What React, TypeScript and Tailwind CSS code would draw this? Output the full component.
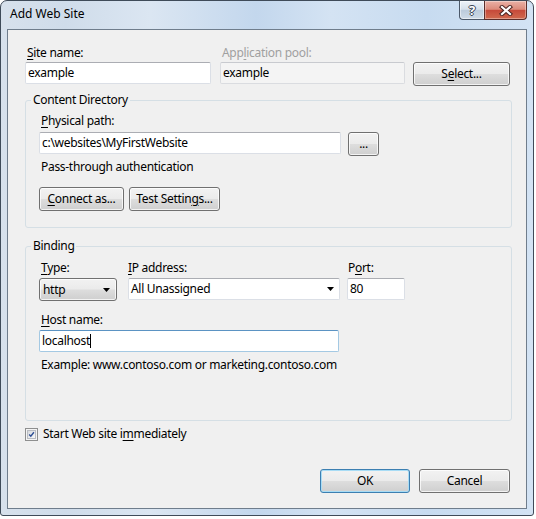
import React from "react";

type Kids = { children?: React.ReactNode };

// Mnemonic (access key) letter
function U({ children }: Kids) {
  return <span className="underline decoration-[1px] underline-offset-[2px]">{children}</span>;
}

function VButton({
  children,
  className = "",
  isDefault = false,
}: Kids & { className?: string; isDefault?: boolean }) {
  return (
    <button
      type="button"
      className={
        "h-[24px] shrink-0 rounded-[3px] border flex items-center justify-center text-[12px] leading-none text-black bg-[linear-gradient(180deg,#f2f2f2_0%,#ebebeb_48%,#dddddd_52%,#cfcfcf_100%)] " +
        (isDefault
          ? "border-[#3c7fb1] shadow-[inset_0_0_0_1px_#a8dcf5] "
          : "border-[#707070] shadow-[inset_0_0_0_1px_rgba(255,255,255,0.75)] ") +
        className
      }
    >
      {children}
    </button>
  );
}

function TextBox({
  children,
  className = "",
  variant = "normal",
}: Kids & { className?: string; variant?: "normal" | "disabled" | "focused" }) {
  const look =
    variant === "focused"
      ? "bg-white border-[#a4c9e3] border-t-[#5b93c3]"
      : variant === "disabled"
      ? "bg-[#f4f4f4] border-[#dadce0] border-t-[#c8cacf]"
      : "bg-white border-[#dbdfe6] border-t-[#abadb3]";
  return (
    <div
      className={
        "h-[22px] shrink-0 rounded-[2px] border flex items-center pl-[2px] text-[12px] leading-none " +
        look +
        " " +
        className
      }
    >
      {children}
    </div>
  );
}

function Arrow() {
  return (
    <svg width="7" height="4" viewBox="0 0 7 4" className="shrink-0">
      <polygon points="0,0 7,0 3.5,4" fill="#000" />
    </svg>
  );
}

function Label({ children, className = "" }: Kids & { className?: string }) {
  return <div className={"h-[16px] leading-[18px] whitespace-nowrap " + className}>{children}</div>;
}

export default function App() {
  return (
    <div className="w-[536px] h-[519px] bg-white font-['Noto_Sans',sans-serif] text-[12px] text-black tracking-[-0.3px]">
      {/* window frame */}
      <div className="w-[534px] h-[516px] flex flex-col rounded-t-[7px] rounded-b-[3px] border border-[#3f4b59] bg-[linear-gradient(90deg,#d7e1ec_0%,#cfdcea_12%,#dbe6f2_28%,#c3d7ed_48%,#d4e3f3_62%,#c7dbf0_80%,#d3e3f4_100%)] px-[6px] pb-[6px]">
        {/* title bar */}
        <div className="h-[28px] flex items-start shrink-0">
          <span className="pl-[3px] pt-[5px] leading-[16px] tracking-normal">Add Web Site</span>
          <div className="ml-auto flex h-[19px]">
            <div className="w-[25px] h-full border-l border-b border-[#4b5869] rounded-bl-[4px] bg-[linear-gradient(180deg,#eef3f8_0%,#d6e0ea_46%,#bccbdb_52%,#cfdbe7_100%)] flex items-center justify-center shadow-[inset_0_0_0_1px_rgba(255,255,255,0.5)]">
              <span className="text-[13px] font-bold leading-none text-white tracking-normal [text-shadow:1px_0_0_#3b4654,-1px_0_0_#3b4654,0_1px_0_#3b4654,0_-1px_0_#3b4654]">
                ?
              </span>
            </div>
            <div className="w-[43px] h-full border-l border-r border-b border-[#5a2d2a] rounded-br-[4px] bg-[linear-gradient(180deg,#eab1a6_0%,#dc8b7b_46%,#c64a3a_52%,#d06a4f_100%)] flex items-center justify-center shadow-[inset_0_0_0_1px_rgba(255,255,255,0.35)]">
              <svg width="14" height="11" viewBox="0 0 14 11">
                <path d="M3 2 L11 9 M11 2 L3 9" stroke="#4a2320" strokeWidth="4.2" strokeLinecap="square" />
                <path d="M3 2 L11 9 M11 2 L3 9" stroke="#ffffff" strokeWidth="2.2" strokeLinecap="square" />
              </svg>
            </div>
          </div>
        </div>

        {/* client area */}
        <div className="flex-1 flex flex-col border border-[#6f7d8c] bg-[#f0f0f0] pt-[14px] pl-[17px] pr-[14px]">
          {/* site name / application pool */}
          <div className="flex items-start">
            <div className="w-[186px] flex flex-col">
              <Label className="pl-[2px]">
                <U>S</U>ite name:
              </Label>
              <TextBox className="mt-[2px]">example</TextBox>
            </div>
            <div className="w-[185px] ml-[9px] flex flex-col">
              <Label className="pl-[2px] text-[#a0a0a0]">
                App<U>l</U>ication pool:
              </Label>
              <TextBox className="mt-[2px]" variant="disabled">
                example
              </TextBox>
            </div>
            <VButton className="w-[97px] ml-[8px] mt-[18px]">
              S<U>e</U>lect...
            </VButton>
          </div>

          {/* content directory */}
          <fieldset className="mt-[6px] border border-[#d5dfe5] rounded-[3px] pl-[13px] pb-[16px] min-w-0">
            <legend className="-ml-[8px] px-[2px] leading-[16px]">Content Directory</legend>
            <Label className="mt-[4px] pl-[2px]">
              <U>P</U>hysical path:
            </Label>
            <div className="mt-[4px] flex items-start">
              <TextBox className="w-[302px]">c:\websites\MyFirstWebsite</TextBox>
              <VButton className="w-[31px] ml-[7px]">...</VButton>
            </div>
            <Label className="mt-[2px] pl-[2px]">Pass-through authentication</Label>
            <div className="mt-[13px] flex gap-[5px]">
              <VButton className="w-[85px]">
                <U>C</U>onnect as...
              </VButton>
              <VButton className="w-[91px]">
                Test Settin<U>g</U>s...
              </VButton>
            </div>
          </fieldset>

          {/* binding */}
          <fieldset className="mt-[10px] border border-[#d5dfe5] rounded-[3px] pl-[13px] pb-[48px] min-w-0">
            <legend className="-ml-[8px] px-[2px] leading-[16px]">Binding</legend>
            <div className="mt-[5px] flex items-start">
              <div className="w-[78px] flex flex-col">
                <Label className="pl-[2px]">
                  <U>T</U>ype:
                </Label>
                <div className="mt-[3px] h-[23px] rounded-[3px] border border-[#707070] bg-[linear-gradient(180deg,#f2f2f2_0%,#ebebeb_48%,#dddddd_52%,#cfcfcf_100%)] shadow-[inset_0_0_0_1px_rgba(255,255,255,0.75)] flex items-center pl-[3px] pr-[6px]">
                  <span className="flex-1">http</span>
                  <Arrow />
                </div>
              </div>
              <div className="w-[212px] ml-[11px] flex flex-col">
                <Label>
                  <U>I</U>P address:
                </Label>
                <TextBox className="mt-[3px] pr-[5px]">
                  <span className="flex-1">All Unassigned</span>
                  <Arrow />
                </TextBox>
              </div>
              <div className="w-[58px] ml-[7px] flex flex-col">
                <Label className="pl-[1px]">
                  P<U>o</U>rt:
                </Label>
                <TextBox className="mt-[3px]">80</TextBox>
              </div>
            </div>
            <Label className="mt-[10px] pl-[2px]">
              <U>H</U>ost name:
            </Label>
            <TextBox className="mt-[3px] w-[300px]" variant="focused">
              localhost
              <span className="inline-block w-px h-[14px] bg-black" />
            </TextBox>
            <Label className="mt-[4px] pl-[2px]">Example: www.contoso.com or marketing.contoso.com</Label>
          </fieldset>

          {/* start immediately */}
          <div className="mt-[5px] h-[16px] flex items-center">
            <div className="w-[13px] h-[13px] border border-[#8e8f8f] bg-[#f4f4f4] p-[1px] shrink-0">
              <div className="w-full h-full border border-[#b9bcc2] bg-[linear-gradient(135deg,#d6d9de_0%,#f7f7f7_100%)] flex items-center justify-center">
                <svg width="9" height="9" viewBox="0 0 9 9">
                  <path d="M1.5 4.6 L3.6 6.8 L7.6 1.6" fill="none" stroke="#2f4f94" strokeWidth="1.8" />
                </svg>
              </div>
            </div>
            <span className="ml-[5px] leading-[18px]">
              Start Web site i<U>m</U>mediately
            </span>
          </div>

          {/* dialog buttons */}
          <div className="mt-[27px] flex justify-end pr-[2px] gap-[9px]">
            <VButton className="w-[90px]" isDefault>
              OK
            </VButton>
            <VButton className="w-[91px]">Cancel</VButton>
          </div>
        </div>
      </div>
    </div>
  );
}
